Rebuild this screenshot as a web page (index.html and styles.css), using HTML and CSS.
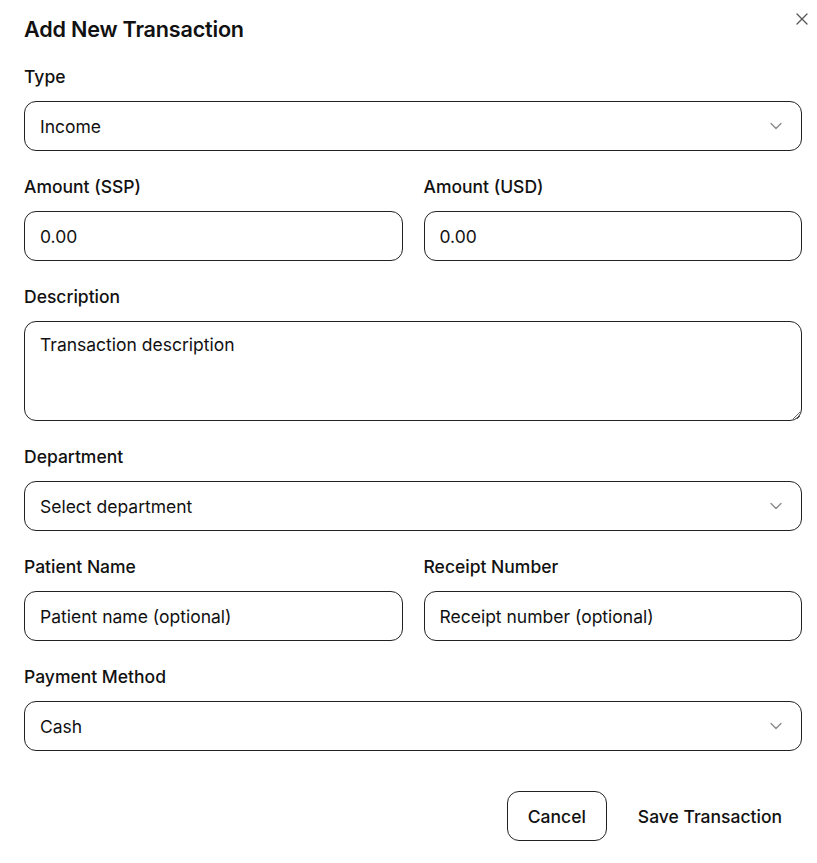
FILE: index.html
```html
<!DOCTYPE html>
<html lang="en">
<head>
<meta charset="utf-8">
<title>Add New Transaction</title>
<link rel="stylesheet" href="styles.css">
</head>
<body>
<div class="dialog">
  <button class="close" aria-label="Close">
    <svg width="12" height="12" viewBox="0 0 12 12"><path d="M1 1L11 11M11 1L1 11" stroke="#555" stroke-width="1.3" fill="none" stroke-linecap="round"/></svg>
  </button>
  <h1 class="title">Add New Transaction</h1>
  <form class="form">
    <div class="field">
      <label class="label">Type</label>
      <div class="select">
        <span>Income</span>
        <svg class="chev" width="12" height="8" viewBox="0 0 12 8"><path d="M1 1.5L6 6.5L11 1.5" stroke="#888" stroke-width="1.3" fill="none" stroke-linecap="round" stroke-linejoin="round"/></svg>
      </div>
    </div>
    <div class="row">
      <div class="field">
        <label class="label">Amount (SSP)</label>
        <input class="input" type="text" value="0.00">
      </div>
      <div class="field">
        <label class="label">Amount (USD)</label>
        <input class="input" type="text" value="0.00">
      </div>
    </div>
    <div class="field">
      <label class="label">Description</label>
      <textarea class="textarea" placeholder="Transaction description"></textarea>
    </div>
    <div class="field">
      <label class="label">Department</label>
      <div class="select">
        <span>Select department</span>
        <svg class="chev" width="12" height="8" viewBox="0 0 12 8"><path d="M1 1.5L6 6.5L11 1.5" stroke="#888" stroke-width="1.3" fill="none" stroke-linecap="round" stroke-linejoin="round"/></svg>
      </div>
    </div>
    <div class="row">
      <div class="field">
        <label class="label">Patient Name</label>
        <input class="input" type="text" placeholder="Patient name (optional)">
      </div>
      <div class="field">
        <label class="label">Receipt Number</label>
        <input class="input" type="text" placeholder="Receipt number (optional)">
      </div>
    </div>
    <div class="field">
      <label class="label">Payment Method</label>
      <div class="select">
        <span>Cash</span>
        <svg class="chev" width="12" height="8" viewBox="0 0 12 8"><path d="M1 1.5L6 6.5L11 1.5" stroke="#888" stroke-width="1.3" fill="none" stroke-linecap="round" stroke-linejoin="round"/></svg>
      </div>
    </div>
    <div class="actions">
      <button type="button" class="btn btn-outline">Cancel</button>
      <button type="button" class="btn btn-plain">Save Transaction</button>
    </div>
  </form>
</div>
</body>
</html>
```
FILE: styles.css
```css
* { box-sizing: border-box; }
html, body { margin: 0; background: #fff; }
body {
  font-family: Inter, "Noto Sans", sans-serif;
  color: #111;
}
.dialog {
  position: relative;
  padding: 15px 15px 22px 24px;
}
.close {
  position: absolute;
  top: 12px;
  right: 8px;
  width: 14px;
  height: 14px;
  padding: 0;
  border: 0;
  background: none;
  display: flex;
  align-items: center;
  justify-content: center;
}
.title {
  margin: 0;
  font-size: 21.6px;
  line-height: 28px;
  font-weight: 600;
  letter-spacing: -0.2px;
}
.form {
  margin-top: 22px;
  display: flex;
  flex-direction: column;
  gap: 24px;
}
.row {
  display: grid;
  grid-template-columns: 1fr 1fr;
  gap: 21px;
}
.field {
  display: flex;
  flex-direction: column;
  gap: 12px;
  min-width: 0;
}
.label {
  font-size: 17.5px;
  line-height: 24px;
  font-weight: 500;
}
.input, .select, .textarea {
  width: 100%;
  height: 50px;
  border: 1px solid #222;
  border-radius: 12px;
  padding: 0 15px;
  font-family: inherit;
  font-size: 17.5px;
  color: #111;
  background: #fff;
  outline: none;
}
.input::placeholder, .textarea::placeholder { color: #111; opacity: 1; }
.select {
  display: flex;
  align-items: center;
  justify-content: space-between;
  padding-right: 19px;
}
.textarea {
  height: 100px;
  padding: 12px 15px;
  line-height: 22px;
  resize: vertical;
  display: block;
}
.actions {
  margin-top: 16px;
  display: flex;
  justify-content: flex-end;
  gap: 11px;
}
.btn {
  height: 50px;
  padding: 0 20px;
  font-family: inherit;
  font-size: 17.5px;
  font-weight: 500;
  color: #111;
  border-radius: 12px;
  background: #fff;
}
.btn-outline { border: 1px solid #222; }
.btn-plain { border: 1px solid transparent; padding: 0 19px; }
```
